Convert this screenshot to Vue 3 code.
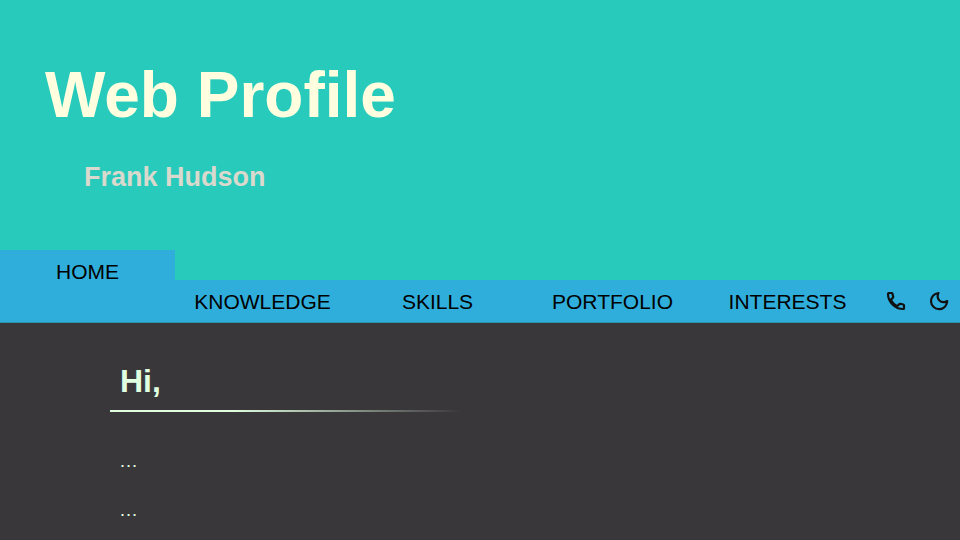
<script setup>
import { ref } from 'vue'

const tabs = ['HOME', 'KNOWLEDGE', 'SKILLS', 'PORTFOLIO', 'INTERESTS']
const active = ref('HOME')
</script>

<template>
  <div class="page">
    <header class="hero">
      <h1 class="title">Web Profile</h1>
      <p class="name">Frank Hudson</p>
    </header>
    <nav class="tabs">
      <button
        v-for="tab in tabs"
        :key="tab"
        type="button"
        class="tab"
        :class="{ active: tab === active }"
        @click="active = tab"
      >{{ tab }}</button>
      <button type="button" class="tab icon" aria-label="Contact">
        <svg viewBox="0 0 24 24" width="24" height="24" fill="none" stroke="currentColor" stroke-width="2.2" stroke-linejoin="round">
          <path d="M4.800 4H7.600Q8.300 4 8.500 4.700L9.200 7.700Q9.300 8.300 8.900 8.700L6.700 10.900Q9 15 13.100 17.300L15.300 15.100Q15.700 14.700 16.300 14.800L19.300 15.500Q20 15.700 20 16.400V19.200Q20 20 19.200 20C11 20 4 13 4 4.800Q4 4 4.800 4Z" />
        </svg>
      </button>
      <button type="button" class="tab icon" aria-label="Dark mode">
        <svg viewBox="0 0 24 24" width="24" height="24" fill="none" stroke="currentColor" stroke-width="2.200" stroke-linejoin="round">
          <path d="M11.500 4A8.100 8.100 0 1 0 20.200 12Q18.500 13.100 16.600 13.100A5.800 5.800 0 0 1 10.600 7.300Q10.600 5.500 11.500 4Z" />
        </svg>
      </button>
    </nav>
    <main class="content">
      <h2 class="greeting">Hi,</h2>
      <p class="line">…</p>
      <p class="line">…</p>
    </main>
  </div>
</template>

<style>
body {
  margin: 0;
  background: #3a373b;
}
</style>

<style scoped>
.page {
  display: flex;
  flex-direction: column;
  min-height: 100vh;
  background: #3a373b;
  font-family: "Liberation Sans", Arial, sans-serif;
}

.hero {
  padding: 58px 45px 59px;
  background: #28cabb;
}

.title {
  margin: 0;
  font-size: 64px;
  line-height: 74px;
  color: #ffffe0;
}

.name {
  margin: 30px 0 0 39px;
  font-size: 27px;
  font-weight: bold;
  line-height: 30px;
  color: #d9d9ce;
}

.tabs {
  display: grid;
  grid-template-columns: repeat(5, 70fr) repeat(2, 17fr);
  background: linear-gradient(#28cabb, #28cabb) top / 100% 29px no-repeat #30aedb;
}

.tab {
  min-width: 0;
  height: 43px;
  margin: 29px 0 0;
  padding: 2px 0 0;
  border: 0;
  border-bottom: 1px solid #2b94a6;
  background: #30aedb;
  font-family: inherit;
  font-size: 21px;
  line-height: 26px;
  color: #000;
  cursor: pointer;
}

.tab.active {
  height: 73px;
  margin-top: -1px;
  padding-bottom: 30px;
}

.tab.icon {
  display: flex;
  align-items: center;
  justify-content: center;
  padding: 0;
  color: #111;
}

.content {
  padding: 36px 110px 0;
}

.greeting {
  width: 350px;
  max-width: 100%;
  box-sizing: border-box;
  margin: 0 0 38px;
  padding: 4px 10px 11px;
  border-bottom: 2px solid;
  border-image: linear-gradient(to right, #e0ffe0 35%, transparent) 1;
  font-size: 32px;
  line-height: 36px;
  color: #e0ffe0;
}

.line {
  margin: 0 0 27px 9px;
  font-size: 19px;
  line-height: 22px;
  color: #e0ffe0;
}
</style>
